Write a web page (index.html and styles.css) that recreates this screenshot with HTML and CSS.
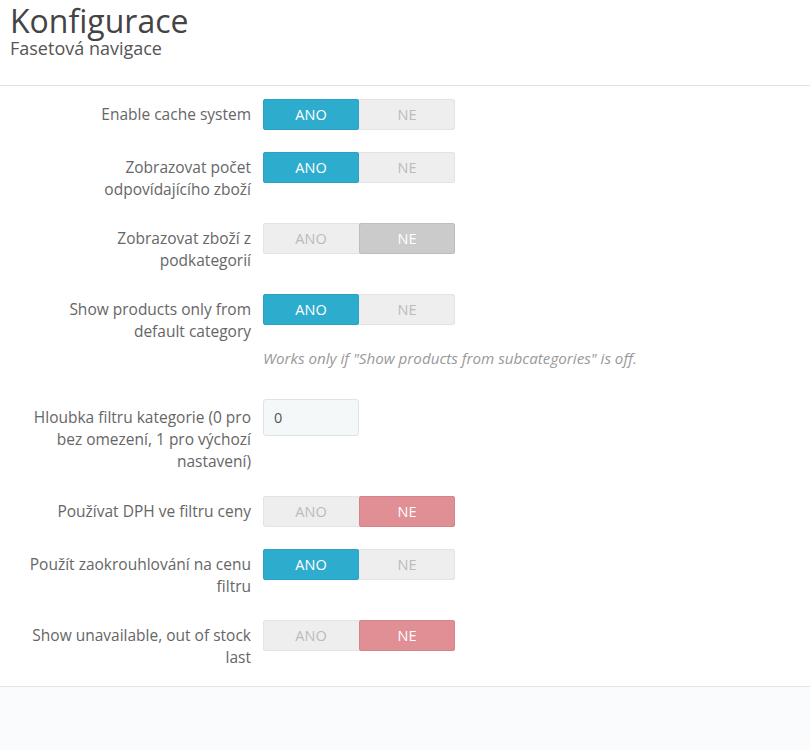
FILE: index.html
```html
<!DOCTYPE html>
<html lang="cs">
<head>
<meta charset="utf-8">
<title>Konfigurace</title>
<link rel="stylesheet" href="styles.css">
</head>
<body>
<header class="page-head">
  <h1 class="title">Konfigurace</h1>
  <div class="subtitle">Fasetová navigace</div>
</header>
<main class="panel">
  <form class="form">
    <div class="row">
      <label class="label">Enable cache system</label>
      <div class="control"><div class="switch"><span class="opt on-yes">ANO</span><span class="opt">NE</span></div></div>
    </div>
    <div class="row">
      <label class="label">Zobrazovat počet odpovídajícího zboží</label>
      <div class="control"><div class="switch"><span class="opt on-yes">ANO</span><span class="opt">NE</span></div></div>
    </div>
    <div class="row">
      <label class="label">Zobrazovat zboží z podkategorií</label>
      <div class="control"><div class="switch"><span class="opt">ANO</span><span class="opt on-gray">NE</span></div></div>
    </div>
    <div class="row">
      <label class="label">Show products only from default category</label>
      <div class="control">
        <div class="switch"><span class="opt on-yes">ANO</span><span class="opt">NE</span></div>
        <p class="help">Works only if "Show products from subcategories" is off.</p>
      </div>
    </div>
    <div class="row row-input">
      <label class="label">Hloubka filtru kategorie (0 pro bez omezení, 1 pro výchozí nastavení)</label>
      <div class="control"><input class="text" type="text" value="0"></div>
    </div>
    <div class="row">
      <label class="label">Používat DPH ve filtru ceny</label>
      <div class="control"><div class="switch"><span class="opt">ANO</span><span class="opt on-no">NE</span></div></div>
    </div>
    <div class="row">
      <label class="label">Použít zaokrouhlování na cenu filtru</label>
      <div class="control"><div class="switch"><span class="opt on-yes">ANO</span><span class="opt">NE</span></div></div>
    </div>
    <div class="row">
      <label class="label">Show unavailable, out of stock last</label>
      <div class="control"><div class="switch"><span class="opt">ANO</span><span class="opt on-no">NE</span></div></div>
    </div>
  </form>
</main>
<div class="foot"></div>
</body>
</html>
```
FILE: styles.css
```css
* { box-sizing: border-box; }
html, body { margin: 0; padding: 0; }
body {
  font-family: "Open Sans", "Liberation Sans", sans-serif;
  background: #fafbfc;
  color: #666;
  width: 810px;
  height: 750px;
  overflow: hidden;
}
.page-head {
  background: #fff;
  padding: 3px 10px 0;
  height: 86px;
  border-bottom: 1px solid #e2e2e2;
}
.title {
  margin: 0;
  font-size: 32px;
  font-weight: 400;
  line-height: 35px;
  color: #444;
}
.subtitle {
  font-size: 18px;
  line-height: 20px;
  color: #555;
}
.panel {
  background: #fff;
  border-bottom: 1px solid #e6e6e6;
  padding: 13px 0 17px;
}
.form {
  display: flex;
  flex-direction: column;
  gap: 22px;
}
.row {
  display: grid;
  grid-template-columns: 225px 192px;
  column-gap: 12px;
  margin-left: 26px;
}
.label {
  text-align: right;
  font-size: 15.5px;
  line-height: 22px;
  padding: 4px 0 1px;
  color: #666;
}
.row-input .label { padding: 7px 0 2px; }
.control { display: flex; flex-direction: column; }
.switch {
  display: flex;
  width: 192px;
  height: 31px;
  background: #eee;
  border-radius: 3px;
  box-shadow: inset 0 0 0 1px #e3e3e3;
}
.opt {
  flex: 1;
  display: flex;
  align-items: center;
  justify-content: center;
  font-size: 14.5px;
  color: #bbb;
  border-radius: 3px;
}
.on-yes { background: #2eacce; color: #fff; box-shadow: inset 0 0 0 1px #2aa2c2; }
.on-no { background: #e08f95; color: #fff; box-shadow: inset 0 0 0 1px #d5838a; }
.on-gray { background: #cbcbcb; color: #fff; box-shadow: inset 0 0 0 1px #bdbdbd; }
.help {
  margin: 23px 0 9px;
  font-size: 15.2px;
  font-style: italic;
  color: #999;
  line-height: 20px;
  white-space: nowrap;
}
.text {
  width: 96px;
  height: 37px;
  background: #f5f8f9;
  border: 1px solid #dde3e6;
  border-radius: 3px;
  padding: 0 10px;
  font-family: inherit;
  font-size: 14.5px;
  color: #555;
}
```
